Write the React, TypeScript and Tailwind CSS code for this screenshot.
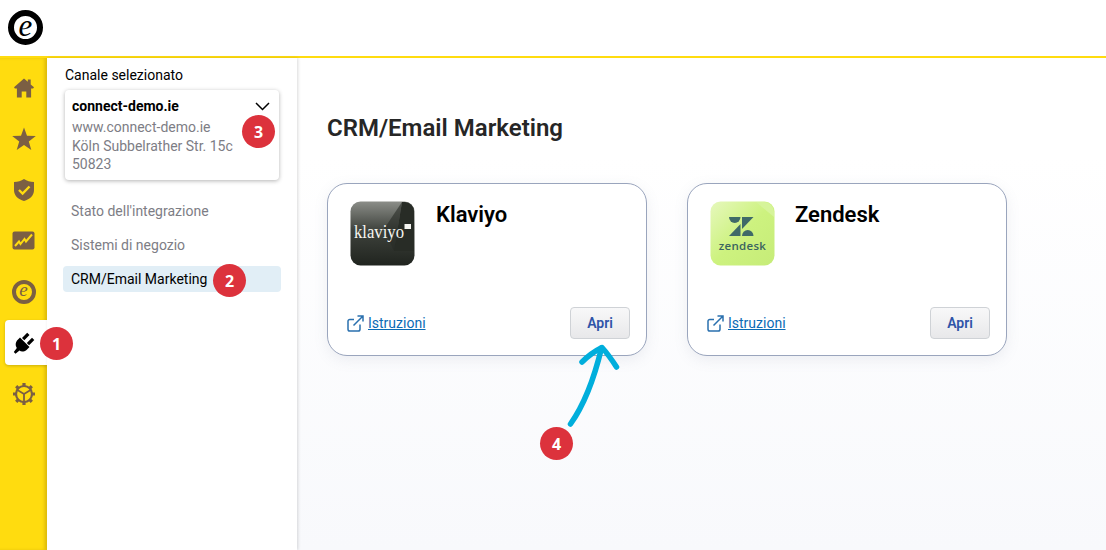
import React from "react";

const BROWN = "#7b5f43";

function Home() {
  return (
    <svg width="20" height="20" viewBox="0 0 20 20" fill={BROWN}>
      <path d="M10 .5 13.800 3.800V1.500h2.900v4.900L20 9.300l-.9 1.200h-2V19.500h-4.800v-6H7.700v6H2.900V10.500H.9L0 9.300Z" />
    </svg>
  );
}
function Star() {
  return (
    <svg width="26" height="26" viewBox="0 0 26 26" fill={BROWN}>
      <path d="M13 1.500 16 9.800l8.800.3-7 5.400 2.500 8.500L13 19l-7.300 5 2.500-8.500-7-5.400 8.800-.3Z" />
    </svg>
  );
}
function Shield() {
  return (
    <svg width="22" height="24" viewBox="0 0 22 24">
      <path d="M11 1c3 2 6 2.800 10 3v8c0 5.500-4 9.200-10 11C5 21.200 1 17.500 1 12V4c4-.2 7-1 10-3Z" fill={BROWN} />
      <path d="m6 12 3.600 3.500L16.500 8.500" fill="none" stroke="#ffdc0f" strokeWidth="2.400" />
    </svg>
  );
}
function Chart() {
  return (
    <svg width="23" height="19" viewBox="0 0 23 19">
      <rect x="0.500" y="0.500" width="22" height="18" rx="2" fill={BROWN} />
      <path d="m3 15 4-4.500 1.500 2.500L12.500 8l1.500 2.500L20 3.500" fill="none" stroke="#ffdc0f" strokeWidth="2" />
    </svg>
  );
}
function Plug() {
  return (
    <svg width="22" height="22" viewBox="0 0 22 22" fill="#000">
      <path d="M7 5.500 16.500 15l-3 3c-2.500 2-5.500 2-7 .5L2.500 21.700.8 20l3-4c-1.800-2.500-1.300-5.500.2-7.500Z" />
      <path d="M9 6 14.200.8l2.300 2.200-5.200 5.200ZM13.800 11 19 5.700l2.300 2.200-5.200 5.300Z" />
    </svg>
  );
}
function Gear() {
  return (
    <svg width="24" height="24" viewBox="0 0 24 24" fill="none" stroke={BROWN}>
      <circle cx="12" cy="12" r="8" strokeWidth="2.200" />
      <path d="M12 12v8M12 12 5 7.800M12 12l7-4.200" strokeWidth="1.800" />
      <path
        d="M12 1v3M12 20v3M1 12h3M20 12h3M4.200 4.200l2.100 2.100M17.700 17.700l2.100 2.100M4.200 19.800l2.100-2.100M17.700 6.300l2.100-2.100"
        strokeWidth="3.200"
      />
    </svg>
  );
}
function RingE({ size, ring, inner, fg, font }: { size: number; ring: number; inner: string; fg: string; font: number }) {
  return (
    <span
      className="flex items-center justify-center rounded-full italic leading-none"
      style={{
        width: size,
        height: size,
        background: inner,
        color: fg,
        fontSize: font,
        border: `${ring}px solid ${fg}`,
        fontFamily: "'Liberation Serif', serif",
      }}
    >
      <span className="relative top-[-2px]">e</span>
    </span>
  );
}
function External() {
  return (
    <svg width="17" height="17" viewBox="0 0 17 17" fill="none" stroke="#2a70ae" strokeWidth="1.500">
      <path d="M13 9.500v4.700a1.800 1.800 0 0 1-1.800 1.800H2.800A1.800 1.800 0 0 1 1 14.200V6.300a1.800 1.800 0 0 1 1.800-1.800H7" />
      <path d="M6.500 10.500 15.500 1.500M10.500 1h5.500v5.500" />
    </svg>
  );
}
function Klaviyo() {
  return (
    <svg width="65" height="65" viewBox="0 0 65 65">
      <defs>
        <linearGradient id="kl" x1="0" y1="0" x2="0" y2="1">
          <stop offset="0" stopColor="#8b8d88" />
          <stop offset="0.450" stopColor="#3e423c" />
          <stop offset="1" stopColor="#20241f" />
        </linearGradient>
      </defs>
      <rect x="0.500" y="0.500" width="64" height="64" rx="10" fill="url(#kl)" />
      <path d="M52 1 44 50 H64 V10 a9 9 0 0 0-9-9Z" fill="#282c26" />
      <path d="M52 1 34 28 44 50Z" fill="#282c26" opacity="0.600" />
      <text x="4" y="37" fontFamily="'Liberation Serif', serif" fontSize="18" textLength="50" lengthAdjust="spacingAndGlyphs" fill="#f4f4f0">klaviyo</text>
      <rect x="54.500" y="23" width="6.500" height="5" fill="#f6f6f2" />
    </svg>
  );
}
function Zendesk() {
  return (
    <svg width="65" height="65" viewBox="0 0 65 65">
      <defs>
        <linearGradient id="zd" x1="0" y1="0" x2="1" y2="1">
          <stop offset="0" stopColor="#e6f8bd" />
          <stop offset="0.500" stopColor="#cdf27f" />
          <stop offset="1" stopColor="#c6ec78" />
        </linearGradient>
      </defs>
      <rect x="0.500" y="0.500" width="64" height="64" rx="10" fill="url(#zd)" />
      <path d="M46 1 H54 a10 10 0 0 1 10 10 V16 Z" fill="#d6f49a" />
      <path d="M19 16h11.500a5.750 6 0 0 1-11.500 0Z" fill="#3f6a68" />
      <path d="M30.500 23V35H19Z" fill="#3f6a68" />
      <path d="M32 16H43.500L32 28Z" fill="#3f6a68" />
      <path d="M32 35a5.750 6 0 0 1 11.500 0Z" fill="#3f6a68" />
      <text x="32.500" y="49" textAnchor="middle" fontFamily="'Open Sans', sans-serif" fontWeight="600" fontSize="11.500" letterSpacing="0.300" fill="#3a6360">zendesk</text>
    </svg>
  );
}

function Card({ name, logo, titleClass }: { name: string; logo: React.ReactNode; titleClass: string }) {
  return (
    <div className="flex h-[173px] w-[320px] flex-col rounded-[20px] border border-[#9aa5bd] bg-white pb-4 pl-[19px] pr-4 pt-[17px] shadow-[0_4px_14px_rgba(120,130,160,0.12)]">
      <div className="flex flex-1 items-start">
        <div className="ml-[3px] h-[65px] w-[65px]">{logo}</div>
        <div className={`text-[22px] font-semibold leading-[28px] text-black ${titleClass}`}>{name}</div>
      </div>
      <div className="flex items-center justify-between">
        <div className="flex items-center gap-[4px] text-[14px] text-[#0a6bb5] underline">
          <External />
          <span>Istruzioni</span>
        </div>
        <button className="h-[32px] w-[60px] rounded-[4px] border border-[#cfd2d6] bg-gradient-to-b from-[#f8f8f9] to-[#e8e8ea] text-[14px] font-semibold text-[#2f54a8]">
          Apri
        </button>
      </div>
    </div>
  );
}

function Badge({ n, className }: { n: number; className: string }) {
  return (
    <span
      className={`absolute z-20 flex h-[33px] w-[33px] items-center justify-center rounded-full bg-[#dc323c] text-[16px] font-bold text-white ${className}`}
      style={{ fontFamily: "'Open Sans', sans-serif" }}
    >
      {n}
    </span>
  );
}

export default function App() {
  const icons = [<Home />, <Star />, <Shield />, <Chart />, <RingE size={24} ring={4} inner="#ffdc0f" fg={BROWN} font={19} />];
  return (
    <div className="relative flex h-[550px] w-[1106px] flex-col overflow-hidden bg-white" style={{ fontFamily: "Roboto, sans-serif" }}>
      <header className="flex h-[58px] items-center border-b-2 border-[#ffdc0f] bg-white pb-[2px] pl-2">
        <RingE size={35} ring={6} inner="#fff" fg="#000" font={31} />
      </header>
      <div className="flex flex-1">
        <nav className="flex w-[47px] flex-col gap-[6px] bg-[#ffdc0f] pl-[5px] pt-[7px] shadow-[inset_-3px_0_3px_rgba(150,120,0,0.25)]">
          {icons.map((icon, i) => (
            <div key={i} className="flex h-[45px] w-[42px] items-center justify-center pr-[5px]">
              {icon}
            </div>
          ))}
          <div className="flex h-[45px] w-[42px] items-center justify-center rounded-l-[4px] bg-white pr-[4px] shadow-[0_1px_3px_rgba(0,0,0,0.2)]">
            <Plug />
          </div>
          <div className="flex h-[45px] w-[42px] items-center justify-center pr-[5px]">
            <Gear />
          </div>
        </nav>
        <aside className="z-10 w-[250px] bg-white px-4 pt-[8px] shadow-[1px_0_3px_rgba(0,0,0,0.15)]">
          <div className="ml-[2px] text-[14px] leading-[18px] text-black">Canale selezionato</div>
          <div className="ml-[2px] mt-[6px] h-[90px] w-[214px] rounded-[4px] bg-white pl-[7px] pt-[7px] shadow-[0_1px_4px_rgba(0,0,0,0.3)]">
            <div className="flex items-center justify-between pr-[9px]">
              <span className="text-[14px] font-bold leading-[18px] text-black">connect-demo.ie</span>
              <svg width="15" height="9" viewBox="0 0 15 9" fill="none" stroke="#000" strokeWidth="1.500">
                <path d="m1 1 6.500 6.500L14 1" />
              </svg>
            </div>
            <div className="mt-[3px] text-[14px] leading-[18.500px] text-[#7d7d85]">
              <div>www.connect-demo.ie</div>
              <div>Köln Subbelrather Str. 15c</div>
              <div>50823</div>
            </div>
          </div>
          <div className="mt-[18px] flex w-[218px] flex-col gap-[8px] text-[14px] leading-[26px]">
            <div className="px-2 text-[#7d7d85]">Stato dell'integrazione</div>
            <div className="px-2 text-[#7d7d85]">Sistemi di negozio</div>
            <div className="rounded-[4px] bg-[#e1eef6] px-2 text-black">CRM/Email Marketing</div>
          </div>
        </aside>
        <main className="flex-1 bg-gradient-to-b from-white from-20% to-[#f8f9fc] pl-[30px] pt-[56px]">
          <h1 className="text-[24px] font-semibold leading-[28px] text-[#262626]">CRM/Email Marketing</h1>
          <div className="mt-[41px] flex gap-[40px]">
            <Card name="Klaviyo" logo={<Klaviyo />} titleClass="ml-[21px]" />
            <Card name="Zendesk" logo={<Zendesk />} titleClass="ml-[20px]" />
          </div>
        </main>
      </div>

      <Badge n={1} className="left-[40px] top-[327px]" />
      <Badge n={2} className="left-[213px] top-[264px]" />
      <Badge n={3} className="left-[242px] top-[115px]" />
      <Badge n={4} className="left-[540px] top-[427px]" />
      <svg className="absolute left-[560px] top-[340px]" width="64" height="92" viewBox="0 0 64 92" fill="none" stroke="#00aedc" strokeWidth="5.500" strokeLinecap="round" strokeLinejoin="round">
        <path d="M10.500 84C24 65 35 35 41.500 8" />
        <path d="M22 22C29 15 35 11 42 7.500 47 13 52 20 56.500 27" />
      </svg>
    </div>
  );
}
